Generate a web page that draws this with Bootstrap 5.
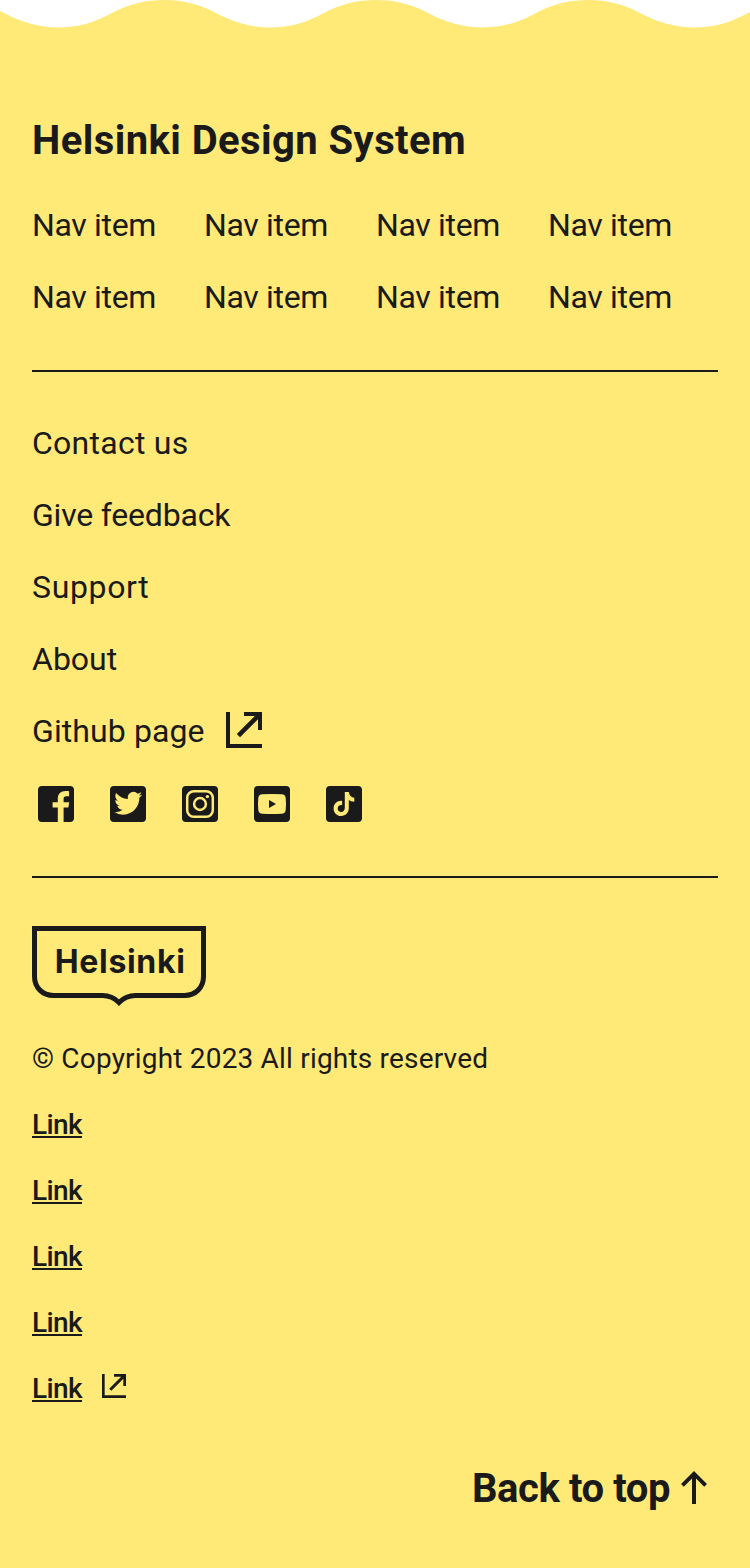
<!DOCTYPE html>
<html lang="en">
<head>
<meta charset="utf-8">
<meta name="viewport" content="width=device-width, initial-scale=1">
<title>Helsinki Design System</title>
<link rel="stylesheet" href="https://cdn.jsdelivr.net/npm/bootstrap@5.3.0/dist/css/bootstrap.min.css">
<style>
  :root { --ink: #1a1a1a; --sun: #ffe977; }
  body { background: var(--sun); color: var(--ink); font-family: Roboto, "Liberation Sans", sans-serif; font-size: 32px; line-height: 48px; }
  a { color: inherit; text-decoration: none; white-space: nowrap; }
  svg { display: block; flex: none; fill: currentColor; }
  .koros { width: 750px; height: 28px; color: #fff; }
  .site-footer { padding: 85px 32px 0; }
  .site-title { font-size: 40px; line-height: 56px; font-weight: 700; letter-spacing: .42px; margin: 0; }
  .main-nav { display: grid; grid-template-columns: repeat(4, 124px); gap: 24px 48px; margin-top: 32px; letter-spacing: -.33px; }
  .rule { height: 2px; background: var(--ink); }
  .rule-nav { margin-top: 49px; }
  .rule-social { margin-top: 48px; }
  .utilities { margin-top: 47px; }
  .ext-lg { width: 48px; height: 48px; margin: -1px 0 0 15px; }
  .ext-sm { width: 32px; height: 32px; margin: 2px 0 0 16px; }
  .social { margin-top: 25px; }
  .social svg { width: 48px; height: 48px; }
  .city-logo { width: 174px; height: 80px; margin-top: 48px; }
  .city-logo text { font-family: Inter, Roboto, sans-serif; font-size: 32px; font-weight: 700; }
  .legal { font-size: 28px; line-height: 42px; margin-top: 32px; }
  .legal-link { height: 42px; }
  .legal-link span { font-weight: 500; letter-spacing: -.62px; border-bottom: 2px solid var(--ink); height: 34px; width: 50px; }
  .to-top { font-size: 40px; line-height: 50px; font-weight: 700; letter-spacing: -.42px; margin-top: 54px; }
</style>
</head>
<body>
<svg class="koros" viewBox="0 0 750 28" aria-hidden="true">
  <path d="M-48 0C-28 0-12 4.500 5 13.500S39 27.400 58.500 27.400S94 22.800 111 13.500S145 0 164.500 0S200 4.500 217 13.500S251 27.400 270.500 27.400S306 22.800 323 13.500S357 0 376.500 0S412 4.500 429 13.500S463 27.400 482.500 27.400S518 22.800 535 13.500S569 0 588.500 0S624 4.500 641 13.500S675 27.400 694.500 27.400S730 22.800 747 13.500S781 0 800.500 0Z"/>
</svg>
<svg width="0" height="0" class="position-absolute" aria-hidden="true">
  <symbol id="i-ext" viewBox="0 0 24 24"><path d="M3 3h2v16h16v2H3zM12 3h9v9h-2V6.600L10 15.600 8.400 14 17.400 5H12z"/></symbol>
</svg>
<footer class="site-footer">
  <h1 class="site-title">Helsinki Design System</h1>
  <nav class="main-nav">
    <a href="#">Nav item</a><a href="#">Nav item</a><a href="#">Nav item</a><a href="#">Nav item</a>
    <a href="#">Nav item</a><a href="#">Nav item</a><a href="#">Nav item</a><a href="#">Nav item</a>
  </nav>
  <div class="rule rule-nav"></div>
  <div class="utilities d-flex flex-column align-items-start gap-4">
    <a href="#" style="letter-spacing:.25px">Contact us</a>
    <a href="#" style="letter-spacing:-.2px">Give feedback</a>
    <a href="#" style="letter-spacing:.65px">Support</a>
    <a href="#">About</a>
    <a href="#" class="d-flex" style="letter-spacing:.1px">Github page<svg class="ext-lg"><use href="#i-ext"/></svg></a>
  </div>
  <div class="social d-flex gap-4">
    <a href="#" aria-label="Facebook"><svg viewBox="0 0 24 24"><path d="M5 3h14a2 2 0 0 1 2 2v14a2 2 0 0 1-2 2h-3.200v-7.200h2.400l.4-2.700h-2.800V9.500c0-.9.400-1.350 1.400-1.350h1.350V5.600c-.5-.1-1-.15-1.700-.15-2.500 0-3.950 1.450-3.950 3.950v1.700h-2.600v2.700h2.600V21H5a2 2 0 0 1-2-2V5a2 2 0 0 1 2-2z"/></svg></a>
    <a href="#" aria-label="Twitter"><svg viewBox="0 0 24 24"><rect x="3" y="3" width="18" height="18" rx="2"/><g transform="translate(5.100 4.650) scale(.583)"><path fill="#ffe977" d="M23.950 4.570a10 10 0 0 1-2.820.770 4.960 4.960 0 0 0 2.160-2.720c-.950.550-2 .950-3.130 1.180a4.920 4.920 0 0 0-8.380 4.480C7.690 8.100 4.070 6.130 1.640 3.160a4.920 4.920 0 0 0 1.520 6.570 4.900 4.900 0 0 1-2.230-.610v.060a4.920 4.920 0 0 0 3.950 4.830 5 5 0 0 1-2.210.080 4.940 4.940 0 0 0 4.600 3.420A9.870 9.870 0 0 1 0 19.540a14 14 0 0 0 7.550 2.210c9.050 0 14-7.500 14-13.980 0-.210 0-.420-.020-.630a9.940 9.940 0 0 0 2.460-2.550z"/></g></svg></a>
    <a href="#" aria-label="Instagram"><svg viewBox="0 0 24 24"><rect x="3" y="3" width="18" height="18" rx="2"/><g fill="none" stroke="#ffe977" stroke-width="1.250"><rect x="5.600" y="5.600" width="12.800" height="12.800" rx="3.300"/><circle cx="12" cy="12" r="2.950"/></g><circle cx="15.700" cy="8.300" r=".85" fill="#ffe977"/></svg></a>
    <a href="#" aria-label="YouTube"><svg viewBox="0 0 24 24"><rect x="3" y="3" width="18" height="18" rx="2"/><path fill="#ffe977" d="M7.200 7.150q4.800-.3 9.600 0 1.900.1 2.050 1.900.3 2.950 0 5.900-.15 1.800-2.050 1.900-4.800.3-9.600 0-1.900-.1-2.050-1.900-.3-2.950 0-5.900.15-1.800 2.050-1.900z"/><path d="M10.500 10v4l3.500-2z"/></svg></a>
    <a href="#" aria-label="TikTok"><svg viewBox="0 0 24 24"><rect x="3" y="3" width="18" height="18" rx="2"/><path fill="#ffe977" d="M12.400 6h2c.15 1.650 1.200 2.750 2.750 2.900v2c-1.050 0-1.950-.3-2.750-.85v4.100c0 2.200-1.650 3.850-3.800 3.850S6.800 16.300 6.800 14.200c0-2.300 1.900-4 4.250-3.750v2.100c-1.200-.3-2.200.5-2.200 1.650 0 1 .8 1.750 1.750 1.750 1.050 0 1.800-.75 1.800-1.950z"/></svg></a>
  </div>
  <div class="rule rule-social"></div>
  <svg class="city-logo" viewBox="0 0 174 80" role="img" aria-label="Helsinki">
    <path fill="none" stroke="currentColor" stroke-width="5" d="M2.500 2.500h169v48c0 11-8 19-19 19h-49c-7 0-12 2.500-16.500 7-4.500-4.500-9.500-7-16.500-7h-49c-11 0-19-8-19-19z"/>
    <text x="22.800" y="47" textLength="130">Helsinki</text>
  </svg>
  <div class="legal d-flex flex-column align-items-start gap-4">
    <span style="letter-spacing:.19px">© Copyright 2023 All rights reserved</span>
    <a class="legal-link d-flex" href="#"><span>Link</span></a>
    <a class="legal-link d-flex" href="#"><span>Link</span></a>
    <a class="legal-link d-flex" href="#"><span>Link</span></a>
    <a class="legal-link d-flex" href="#"><span>Link</span></a>
    <a class="legal-link d-flex" href="#"><span>Link</span><svg class="ext-sm"><use href="#i-ext"/></svg></a>
  </div>
  <a class="to-top d-flex justify-content-end" href="#">Back to top<svg width="48" height="48" viewBox="0 0 24 24"><path d="m12 3.500 6.500 6.500-1.400 1.400L13 7.300V20h-2V7.300l-4.100 4.100L5.500 10z"/></svg></a>
</footer>
<script src="https://cdn.jsdelivr.net/npm/bootstrap@5.3.0/dist/js/bootstrap.bundle.min.js"></script>
</body>
</html>
